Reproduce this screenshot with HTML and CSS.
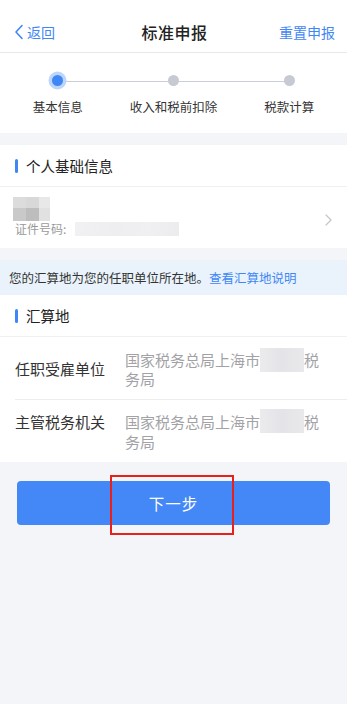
FILE: index.html
```html
<!DOCTYPE html>
<html lang="zh-CN">
<head>
<meta charset="utf-8">
<meta name="viewport" content="width=347">
<title>标准申报</title>
<link rel="stylesheet" href="styles.css">
</head>
<body>
<div class="page">
  <header class="nav">
    <div class="nav-left">
      <svg class="back-icon" width="10" height="16" viewBox="0 0 10 16"><path d="M8 1.5 L2 8 L8 14.5" fill="none" stroke="#3f87f5" stroke-width="1.6" stroke-linecap="round" stroke-linejoin="round"/></svg>
      <span>返回</span>
    </div>
    <div class="nav-title">标准申报</div>
    <div class="nav-right">重置申报</div>
  </header>

  <section class="steps">
    <div class="step active"><span class="dot"></span><span class="step-label">基本信息</span></div>
    <div class="step"><span class="dot"></span><span class="step-label">收入和税前扣除</span></div>
    <div class="step last"><span class="dot"></span><span class="step-label">税款计算</span></div>
  </section>

  <section class="card">
    <div class="card-head"><span class="bar"></span>个人基础信息</div>
    <div class="person">
      <div class="person-info">
        <div class="mosaic name-mosaic">
          <i class="m1"></i><i class="m2"></i><i class="m3"></i>
          <i class="m4"></i><i class="m5"></i><i class="m6"></i>
        </div>
        <div class="cert">证件号码:<span class="id-blur"></span></div>
      </div>
      <svg class="chev" width="7" height="12" viewBox="0 0 7 12"><path d="M1 1 L6 6 L1 11" fill="none" stroke="#c6c7cc" stroke-width="1.3" stroke-linecap="round" stroke-linejoin="round"/></svg>
    </div>
  </section>

  <div class="notice">您的汇算地为您的任职单位所在地。<a class="notice-link">查看汇算地说明</a></div>

  <section class="card card-flush">
    <div class="card-head"><span class="bar"></span>汇算地</div>
    <div class="row row-center">
      <div class="row-label">任职受雇单位</div>
      <div class="row-value">国家税务总局上海市<span class="val-blur"></span>税务局</div>
    </div>
    <div class="row">
      <div class="row-label">主管税务机关</div>
      <div class="row-value">国家税务总局上海市<span class="val-blur"></span>税务局</div>
    </div>
  </section>

  <div class="btn-wrap">
    <button class="btn-next">下一步</button>
    <span class="highlight"></span>
  </div>
</div>
</body>
</html>
```

FILE: styles.css
```css
* { box-sizing: border-box; }
html, body {
  margin: 0;
  padding: 0;
  background: #f4f5f8;
}
body {
  font-family: "Noto Sans CJK SC", "Noto Sans", sans-serif;
  color: #333;
  width: 347px;
  height: 704px;
  overflow: hidden;
}
.page { width: 347px; }

.nav {
  height: 53px;
  padding: 12px 12px 0 14px;
  background: #fff;
  border-bottom: 1px solid #e9e9ec;
  display: flex;
  align-items: center;
  justify-content: space-between;
  position: relative;
}
.nav-left {
  display: flex;
  align-items: center;
  gap: 3px;
  color: #3f87f5;
  font-size: 14px;
  width: 80px;
}
.nav-title {
  font-size: 16px;
  font-weight: 500;
  color: #222;
  letter-spacing: 0.5px;
}
.nav-right {
  width: 80px;
  text-align: right;
  font-size: 14px;
  color: #3f87f5;
}

.steps {
  background: #fff;
  height: 80px;
  display: grid;
  grid-template-columns: repeat(3, 1fr);
  margin-bottom: 12px;
}
.step {
  position: relative;
  display: flex;
  flex-direction: column;
  align-items: center;
  padding-top: 22px;
}
.step::after {
  content: "";
  position: absolute;
  left: 50%;
  width: 100%;
  top: 27.5px;
  height: 1px;
  background: #cbcdd8;
}
.step.last::after { display: none; }
.dot {
  position: relative;
  z-index: 1;
  width: 11px;
  height: 11px;
  border-radius: 50%;
  background: #c8cad3;
}
.step.active .dot {
  background: #3f87f5;
  box-shadow: 0 0 0 3.5px #bcd6fb;
}
.step-label {
  margin-top: 13px;
  font-size: 12.5px;
  color: #333;
  line-height: 16px;
}

.card {
  background: #fff;
  margin-bottom: 12px;
}
.card-flush { margin-bottom: 0; }
.card-head {
  height: 42px;
  display: flex;
  align-items: center;
  padding-left: 15px;
  font-size: 14.5px;
  color: #222;
  border-bottom: 1px solid #f0f0f2;
}
.bar {
  width: 3px;
  height: 14px;
  border-radius: 2px;
  background: #3f87f5;
  margin-right: 8px;
}

.person {
  height: 61px;
  display: flex;
  align-items: center;
  justify-content: space-between;
  padding: 0 15px 0 13px;
}
.person-info {
  display: flex;
  flex-direction: column;
  padding-bottom: 2px;
}
.mosaic {
  display: grid;
  grid-template-columns: 13px 13px 11px;
  grid-template-rows: 11px 13px;
}
.m1 { background: #dcdcdc; }
.m2 { background: #d8d8d8; }
.m3 { background: #e8e8e8; }
.m4 { background: #c9c9c9; }
.m5 { background: #bdbdbd; }
.m6 { background: #e1e1e1; }
.cert {
  padding-left: 2px;
  font-size: 12px;
  color: #9a9a9a;
  line-height: 16px;
  display: flex;
  align-items: center;
}
.id-blur {
  display: inline-block;
  width: 104px;
  height: 14px;
  margin-left: 9px;
  background: linear-gradient(90deg, #f1f1f3 0%, #eeeef1 40%, #f0f0f2 70%, #ececef 100%);
}
.chev { margin-top: 4px; }

.notice {
  height: 35px;
  display: flex;
  align-items: center;
  padding-left: 9px;
  background: #eaf3fc;
  font-size: 12.5px;
  color: #333;
}
.notice-link {
  color: #3f87f5;
}

.row {
  display: flex;
  align-items: flex-start;
  margin-left: 15px;
  padding: 12px 0 10px;
  border-bottom: 1px solid #ededf0;
  font-size: 15px;
  line-height: 20px;
}
.row:last-child { border-bottom: none; }
.row-center {
  align-items: center;
  padding: 14px 0 11px;
  line-height: 18.5px;
}
.row-label {
  width: 110px;
  color: #333;
  flex: none;
}
.row-value {
  width: 200px;
  color: #a2a2a6;
}
.val-blur {
  display: inline-block;
  width: 44px;
  height: 24px;
  vertical-align: top;
  margin: -3px 0 -5px;
  background: linear-gradient(90deg, #ebebee 0%, #e4e4e8 50%, #e9e9ec 100%);
}

.btn-wrap {
  position: relative;
  padding: 19px 17px 0;
}
.btn-next {
  display: block;
  width: 100%;
  height: 44px;
  border: none;
  border-radius: 4px;
  background: #4487f6;
  color: #fff;
  font-family: "Noto Sans CJK SC", "Noto Sans", sans-serif;
  font-size: 15.5px;
  letter-spacing: 1px;
}
.highlight {
  position: absolute;
  left: 110px;
  top: 13px;
  width: 124px;
  height: 60px;
  border: 2px solid #e8201c;
  pointer-events: none;
}
```
